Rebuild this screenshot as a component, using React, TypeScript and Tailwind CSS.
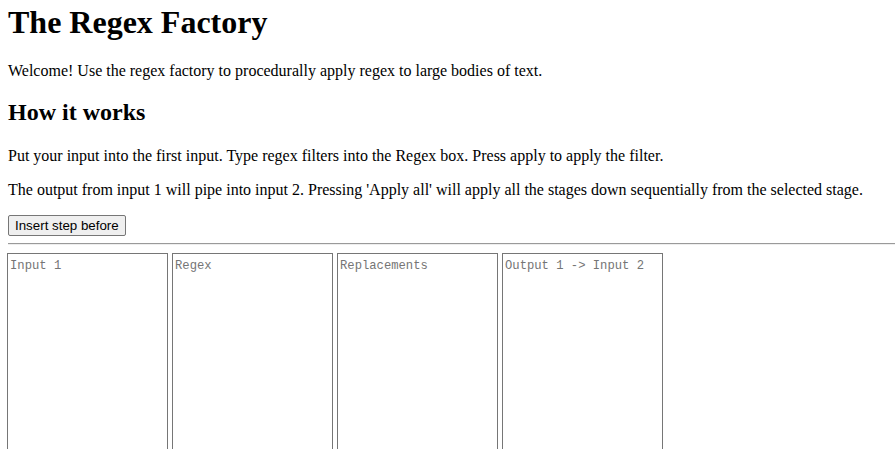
import React from "react";

export default function App() {
  const boxes = ["Input 1", "Regex", "Replacements", "Output 1 -> Input 2"];
  return (
    <div className="bg-white text-black w-[895px] h-[449px] overflow-hidden" style={{ fontFamily: '"Liberation Serif", "Times New Roman", serif' }}>
      <div className="pl-2">
        <h1 className="mt-[4px] text-[32px] leading-[37px] font-bold m-0">The Regex Factory</h1>
        <p className="mt-[21px] text-[16px] leading-[18px]">
          Welcome! Use the regex factory to procedurally apply regex to large bodies of text.
        </p>
        <h2 className="mt-[18px] text-[24px] leading-[28px] font-bold">How it works</h2>
        <p className="mt-[21px] text-[16px] leading-[18px]">
          Put your input into the first input. Type regex filters into the Regex box. Press apply to apply the filter.
        </p>
        <p className="mt-[16px] text-[16px] leading-[18px]">
          The output from input 1 will pipe into input 2. Pressing 'Apply all' will apply all the stages down sequentially from the selected stage.
        </p>
        <button
          className="mt-[16px] block h-[21px] px-[6px] border border-[#767676] rounded-[2px] bg-[#efefef] text-[13.33px] leading-[16px] text-black"
          style={{ fontFamily: '"Liberation Sans", Arial, sans-serif' }}
        >
          Insert step before
        </button>
        <div className="mt-[7px] h-[2px] border-t border-t-[#9a9a9a] border-b border-b-[#eeeeee]" />
        <div className="mt-[8px] -ml-px flex gap-[4px]">
          {boxes.map((b) => (
            <textarea
              key={b}
              placeholder={b}
              className="w-[161px] h-[300px] border border-[#767676] px-[2px] pt-[4px] pb-[2px] text-[12.2px] leading-[16px] resize-none placeholder:text-[#757575] outline-none"
              style={{ fontFamily: '"Liberation Mono", "DejaVu Sans Mono", monospace' }}
            />
          ))}
        </div>
      </div>
    </div>
  );
}
